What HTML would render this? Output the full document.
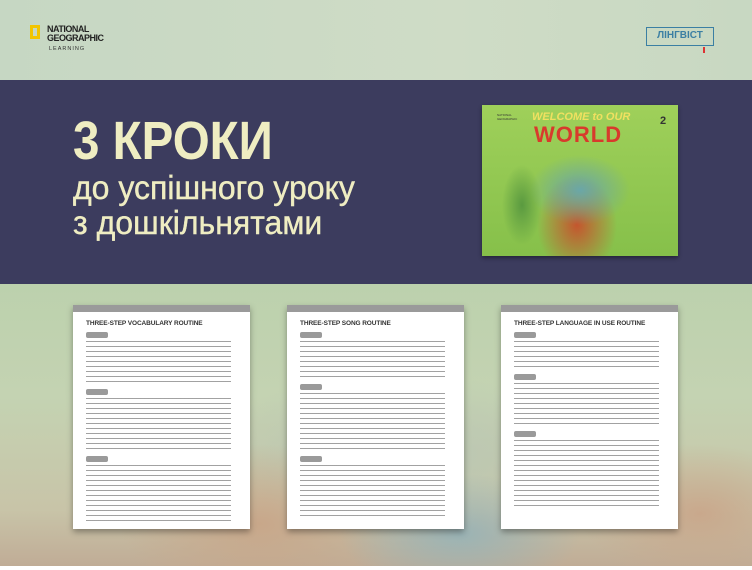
<!DOCTYPE html><html><head><meta charset="utf-8"><style>
*{margin:0;padding:0;box-sizing:border-box}
body{width:752px;height:570px;overflow:hidden;background:#fff;font-family:"Liberation Sans",sans-serif;position:relative}
.top{position:absolute;left:0;top:0;width:752px;height:80px;background:linear-gradient(90deg,#c6d7c3,#cfdcc6 60%,#c8d8c2)}
.nav{position:absolute;left:0;top:80px;width:752px;height:204px;background:#3c3c5e}
.bot{position:absolute;left:0;top:284px;width:752px;height:282px;background:
radial-gradient(ellipse 120px 60px at 460px 250px,#9ab3b5,transparent),
radial-gradient(ellipse 140px 80px at 260px 240px,#c8a78a,transparent),
radial-gradient(ellipse 120px 70px at 700px 230px,#c9a88c,transparent),
radial-gradient(ellipse 200px 80px at 400px 170px,#b8c6b4,transparent),
linear-gradient(180deg,#bcd1ad,#c4d3b2 40%,#c8c4a8 80%,#c0ac96)}
.t1{position:absolute;left:73px;top:110px;color:#efedc2;font-size:54px;font-weight:bold;transform:scaleX(.88);transform-origin:0 0;white-space:nowrap}
.t2{position:absolute;left:73px;top:170px;color:#efedc2;font-size:33px;line-height:35px;transform:scaleX(.97);transform-origin:0 0;white-space:nowrap;-webkit-text-stroke:.4px #efedc2}
.book{position:absolute;left:482px;top:105px;width:196px;height:151px;background:radial-gradient(ellipse 50px 35px at 98px 85px,#6aa7a8,transparent),radial-gradient(ellipse 40px 50px at 95px 120px,#c4562e,transparent),radial-gradient(ellipse 20px 40px at 40px 100px,#5a9a40,transparent),linear-gradient(#9fd05a,#86c04a);box-shadow:0 2px 4px rgba(0,0,0,.4)}
.doc{position:absolute;top:305px;width:177px;height:224px;background:#fff;border-top:7px solid #9a9a9a;box-shadow:0 3px 6px rgba(0,0,0,.35);padding:7px 13px;overflow:hidden}
.doc h4{font-size:6.5px;color:#333;margin:1px 0 5px;letter-spacing:-.1px}
.tag{display:block;width:22px;height:6px;background:#9a9a9a;border-radius:2px;margin:3px 0 3px}
.ln{height:var(--h);background:repeating-linear-gradient(180deg,#8a8a8a 0 1.2px,transparent 1.2px 5px);width:96%;opacity:.8;margin-bottom:2px}
</style></head><body>
<div class="top"></div>
<div style="position:absolute;left:30px;top:25px;width:10px;height:14px;border:3px solid #f2c500"></div>
<div style="position:absolute;left:47px;top:25px;font-size:9px;font-weight:bold;color:#222;line-height:9px;letter-spacing:-.5px">NATIONAL<br>GEOGRAPHIC</div>
<div style="position:absolute;left:49px;top:46px;font-size:5.5px;color:#333;letter-spacing:1px">LEARNING</div>
<div style="position:absolute;left:646px;top:27px;width:68px;height:19px;border:1.5px solid #3b7fa3;color:#3b7fa3;font-size:10px;font-weight:bold;text-align:center;line-height:16px">ЛІНГВІСТ</div>
<div style="position:absolute;left:703px;top:47px;width:2px;height:6px;background:#d33"></div>
<div class="nav"></div>
<div class="t1">3 КРОКИ</div>
<div class="t2">до успішного уроку<br>з дошкільнятами</div>
<div class="book">
<div style="position:absolute;left:50px;top:6px;font-size:11px;font-weight:bold;color:#f0e060;font-style:italic">WELCOME to OUR</div>
<div style="position:absolute;left:52px;top:17px;font-size:22px;font-weight:bold;color:#d83a2c;letter-spacing:1px">WORLD</div>
<div style="position:absolute;left:178px;top:10px;font-size:11px;font-weight:bold;color:#333">2</div>
<div style="position:absolute;left:15px;top:8px;font-size:3px;color:#333">NATIONAL<br>GEOGRAPHIC</div>
</div>
<div class="bot"></div>
<div class="doc" style="left:73px"><h4>THREE-STEP VOCABULARY ROUTINE</h4><span class="tag"></span><div class="ln" style="--h:45px"></div><span class="tag"></span><div class="ln" style="--h:55px"></div><span class="tag"></span><div class="ln" style="--h:60px"></div></div>
<div class="doc" style="left:287px"><h4>THREE-STEP SONG ROUTINE</h4><span class="tag"></span><div class="ln" style="--h:40px"></div><span class="tag"></span><div class="ln" style="--h:60px"></div><span class="tag"></span><div class="ln" style="--h:55px"></div></div>
<div class="doc" style="left:501px"><h4>THREE-STEP LANGUAGE IN USE ROUTINE</h4><span class="tag"></span><div class="ln" style="--h:30px"></div><span class="tag"></span><div class="ln" style="--h:45px"></div><span class="tag"></span><div class="ln" style="--h:70px"></div></div>
</body></html>
